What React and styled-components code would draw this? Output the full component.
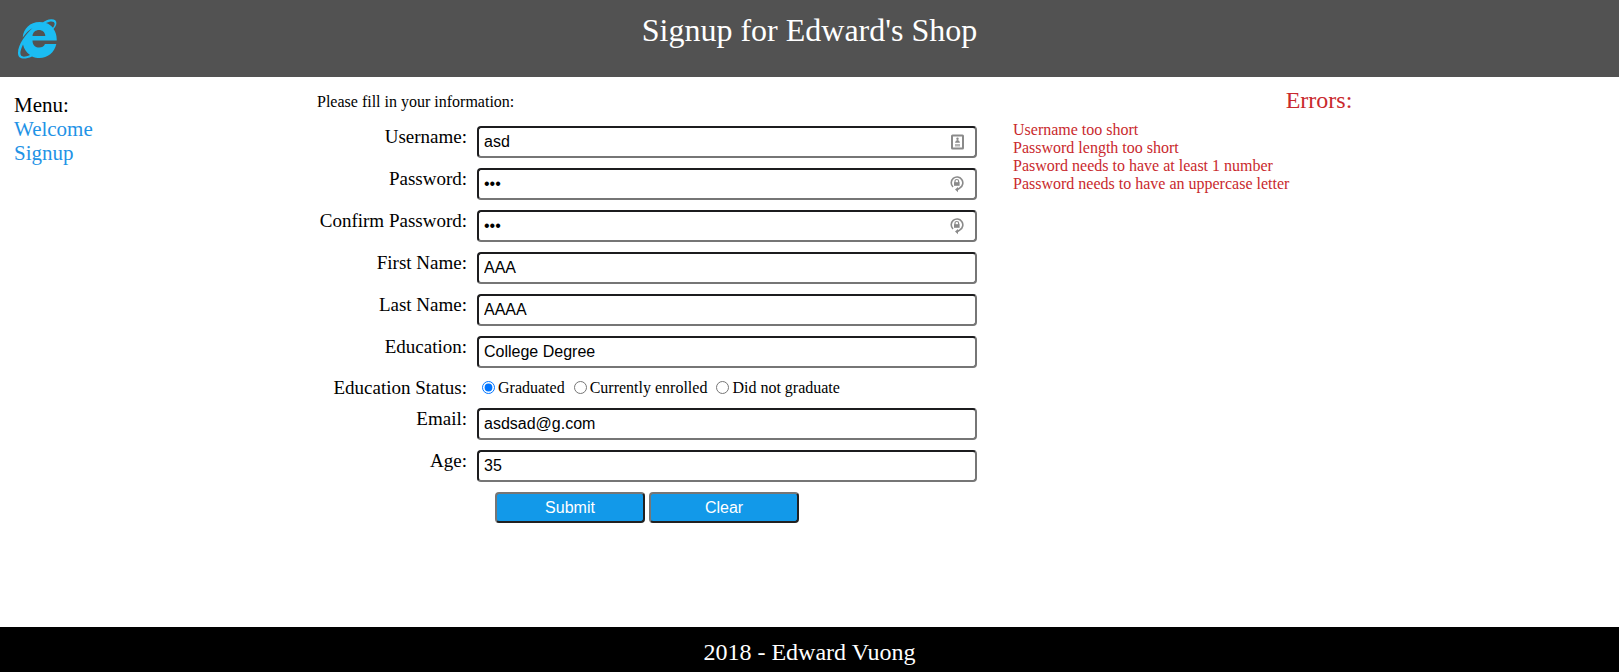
import React from 'react';
import styled, { createGlobalStyle } from 'styled-components';

const GlobalStyle = createGlobalStyle`
  *, *::before, *::after { box-sizing: border-box; }
  body {
    margin: 0;
    background: #fff;
    color: #000;
    font: 16px/18px "Liberation Serif", "Times New Roman", serif;
  }
`;

const Page = styled.div`
  display: flex;
  flex-direction: column;
  min-height: 100vh;
`;

const Header = styled.header`
  display: grid;
  grid-template-columns: 60px 1fr 60px;
  min-height: 77px;
  background: #525252;
  color: #fff;
`;

const LogoLink = styled.a`
  padding: 19px 0 0 17px;
  svg { display: block; }
`;

const Title = styled.h1`
  margin: 0;
  padding-top: 12px;
  font-size: 32px;
  line-height: 36px;
  font-weight: 400;
  text-align: center;
`;

const Content = styled.main`
  flex: 1;
  display: grid;
  grid-template-columns: minmax(0, 317fr) minmax(0, 696fr) minmax(0, 606fr);
`;

const Menu = styled.nav`
  padding: 16px 14px;
  font-size: 21px;
  line-height: 24px;
`;

const MenuLink = styled.a`
  display: block;
  color: #1f93e6;
  text-decoration: none;
`;

const Form = styled.form`
  padding: 16px 36px 0 0;
`;

const Intro = styled.p`
  margin: 0 0 15px;
`;

const Row = styled.div`
  display: grid;
  grid-template-columns: 150px minmax(0, 1fr);
  column-gap: 10px;
  margin-bottom: 10px;
`;

const StatusRow = styled(Row)`
  margin: -1px 0 9px;
`;

const Label = styled.label`
  font-size: 19px;
  line-height: 22px;
  text-align: right;
  white-space: nowrap;
`;

const Control = styled.div`
  display: grid;
  align-items: center;
  & > * { grid-area: 1 / 1; }
  & > svg {
    justify-self: end;
    margin-right: 13px;
    pointer-events: none;
  }
`;

const Input = styled.input`
  width: 100%;
  height: 32px;
  padding: 0 5px 1px;
  border: 2px solid;
  border-color: #1c1c1e #767676 #767676 #1c1c1e;
  border-radius: 4px;
  background: #fff;
  color: #000;
  font: 16px "Liberation Sans", Arial, sans-serif;
  outline: none;
`;

const Choices = styled.div`
  padding-top: 2px;
  white-space: nowrap;
`;

const Radio = styled.input.attrs({ type: 'radio' })`
  width: 13px;
  height: 13px;
  margin: 0 3px 0 5px;
  vertical-align: -1px;
`;

const Actions = styled.div`
  display: flex;
  gap: 4px;
  padding-left: 178px;
`;

const Button = styled.button`
  width: 150px;
  height: 31px;
  padding: 0;
  border: 2px solid;
  border-color: #767676 #212121 #212121 #767676;
  border-radius: 4px;
  background: #1299e9;
  color: #fff;
  font: 16px "Liberation Sans", Arial, sans-serif;
`;

const Errors = styled.section`
  padding: 10px 0;
  color: #c9292d;
`;

const ErrorsTitle = styled.h2`
  margin: 0 0 8px;
  padding-left: 6px;
  font-size: 24px;
  line-height: 26px;
  font-weight: 400;
  text-align: center;
`;

const ErrorList = styled.ul`
  margin: 0;
  padding: 0;
  list-style: none;
`;

const Footer = styled.footer`
  padding: 12px 0 7px;
  background: #000;
  color: #fff;
  font-size: 24px;
  line-height: 26px;
  text-align: center;
`;

const Logo = () => (
  <svg width="41" height="41" viewBox="0 0 41 41" aria-hidden="true">
    <path
      fill="#1bbcf2"
      fillRule="evenodd"
      d="M22.500 3C13 3 6.500 9.500 5.700 18.500C9 14 12 11 15.500 9C9 15 1 25 1 34C1 40 7 41 15 37.500C26 42 37 36 39.300 25H28C26 30.500 15.500 30 15.500 21.500H39.700C39.900 16.500 38.500 12.500 36.500 10C40.500 6 41 0 34 0.300C31 0.500 28 2 26 3.300ZM15.500 17C16 9 28 9 28.300 17ZM29 4C35 0.800 40.500 2.500 36 8.800C34 6.500 32 5 29 4ZM6 25.500C7 30 9.500 33.500 13 36C4 40 0.500 37 6 25.500Z"
    />
  </svg>
);

const ContactIcon = () => (
  <svg width="13" height="16" viewBox="0 0 13 16" fill="none" aria-hidden="true">
    <rect x="1" y="1.500" width="11" height="13" rx="0.500" stroke="#8a8a8a" strokeWidth="2" />
    <circle cx="6.500" cy="4.800" r="1.200" fill="#8a8a8a" />
    <path d="M4 8.800Q4.500 6 6.500 6T9 8.800Z" fill="#8a8a8a" />
    <path d="M4 10H9V12.500H4Z" fill="#b5b5b5" />
  </svg>
);

const LockIcon = () => (
  <svg width="14" height="18" viewBox="0 0 14 18" fill="none" aria-hidden="true">
    <path d="M3 12A5.800 5.800 0 1 1 10 12.800L7.500 14.500" stroke="#8a8a8a" strokeWidth="1.600" />
    <path d="M8 12V17.200L5 14.500Z" fill="#8a8a8a" />
    <path d="M5 8V6Q5 4.500 6.800 4.500T8.600 6V8" stroke="#8a8a8a" strokeWidth="1.200" />
    <rect x="4" y="7.200" width="5.600" height="3.600" fill="#8a8a8a" />
  </svg>
);

const accountFields = [
  { id: 'username', label: 'Username:', value: 'asd', icon: <ContactIcon /> },
  { id: 'password', label: 'Password:', type: 'password', value: 'asd', icon: <LockIcon /> },
  { id: 'confirm', label: 'Confirm Password:', type: 'password', value: 'asd', icon: <LockIcon /> },
  { id: 'first-name', label: 'First Name:', value: 'AAA' },
  { id: 'last-name', label: 'Last Name:', value: 'AAAA' },
  { id: 'education', label: 'Education:', value: 'College Degree' },
];

const contactFields = [
  { id: 'email', label: 'Email:', value: 'asdsad@g.com' },
  { id: 'age', label: 'Age:', value: '35' },
];

const statuses = ['Graduated', 'Currently enrolled', 'Did not graduate'];

const errors = [
  'Username too short',
  'Password length too short',
  'Pasword needs to have at least 1 number',
  'Password needs to have an uppercase letter',
];

const Field = ({ id, label, type = 'text', value, icon }) => (
  <Row>
    <Label htmlFor={id}>{label}</Label>
    <Control>
      <Input id={id} name={id} type={type} defaultValue={value} />
      {icon}
    </Control>
  </Row>
);

export default function App() {
  return (
    <Page>
      <GlobalStyle />
      <Header>
        <LogoLink href="#" aria-label="Home"><Logo /></LogoLink>
        <Title>Signup for Edward's Shop</Title>
      </Header>
      <Content>
        <Menu>
          Menu:
          <MenuLink href="#welcome">Welcome</MenuLink>
          <MenuLink href="#signup">Signup</MenuLink>
        </Menu>
        <Form onSubmit={(e) => e.preventDefault()}>
          <Intro>Please fill in your information:</Intro>
          {accountFields.map((f) => <Field key={f.id} {...f} />)}
          <StatusRow role="radiogroup" aria-labelledby="status-label">
            <Label as="span" id="status-label">Education Status:</Label>
            <Choices>
              {statuses.map((s, i) => (
                <React.Fragment key={s}>
                  <label><Radio name="status" value={s} defaultChecked={i === 0} />{s}</label>{' '}
                </React.Fragment>
              ))}
            </Choices>
          </StatusRow>
          {contactFields.map((f) => <Field key={f.id} {...f} />)}
          <Actions>
            <Button type="submit">Submit</Button>
            <Button type="reset">Clear</Button>
          </Actions>
        </Form>
        <Errors>
          <ErrorsTitle>Errors:</ErrorsTitle>
          <ErrorList>
            {errors.map((e) => <li key={e}>{e}</li>)}
          </ErrorList>
        </Errors>
      </Content>
      <Footer>2018 - Edward Vuong</Footer>
    </Page>
  );
}
